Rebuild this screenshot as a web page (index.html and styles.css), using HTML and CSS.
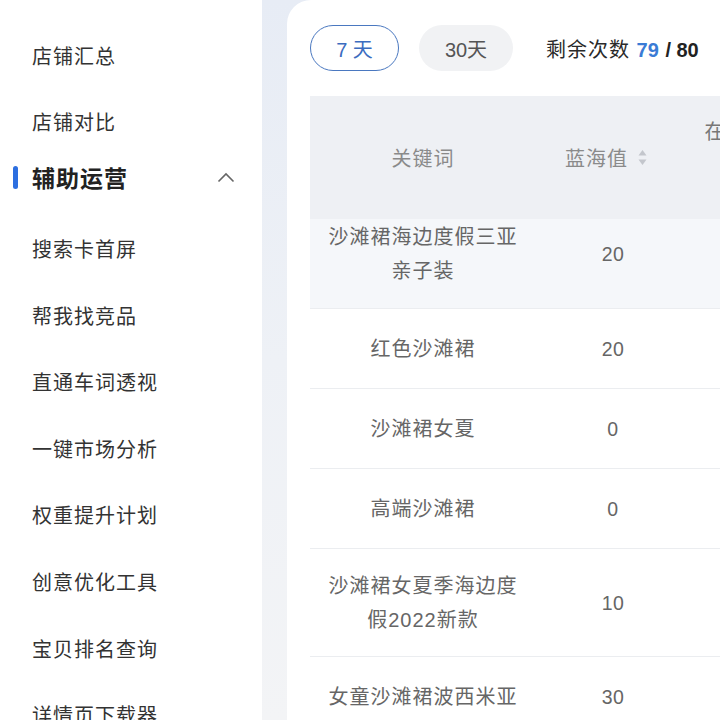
FILE: index.html
```html
<!DOCTYPE html>
<html lang="zh-CN">
<head>
    <meta charset="UTF-8">
    <meta name="viewport" content="width=device-width, initial-scale=1.0">
    <title>辅助运营</title>
    <link rel="stylesheet" href="styles.css">
</head>
<body>
    <div class="layout">
        <nav class="sidebar">
            <div class="nav-item">店铺汇总</div>
            <div class="nav-item">店铺对比</div>
            <div class="nav-group">
                <span class="group-bar"></span>
                <span class="group-title">辅助运营</span>
                <svg class="chevron" width="18" height="11" viewBox="0 0 18 11"><polyline points="1.5,9.5 9,2 16.5,9.5" fill="none" stroke="#666" stroke-width="1.6"/></svg>
            </div>
            <div class="nav-item">搜索卡首屏</div>
            <div class="nav-item">帮我找竞品</div>
            <div class="nav-item">直通车词透视</div>
            <div class="nav-item">一键市场分析</div>
            <div class="nav-item">权重提升计划</div>
            <div class="nav-item">创意优化工具</div>
            <div class="nav-item">宝贝排名查询</div>
            <div class="nav-item">详情页下载器</div>
        </nav>

        <main class="main">
            <div class="card">
                <div class="toolbar">
                    <button class="pill active">7 天</button>
                    <button class="pill">30天</button>
                    <div class="quota">剩余次数 <b class="used">79</b> <b>/ 80</b></div>
                </div>

                <div class="table">
                    <div class="thead">
                        <div class="th">关键词</div>
                        <div class="th sortable">蓝海值
                            <svg class="sorter" width="9" height="17" viewBox="0 0 9 17"><polygon points="4.5,1 8.5,6.5 0.5,6.5" fill="#c3c6cc"/><polygon points="4.5,16 8.5,10.5 0.5,10.5" fill="#c3c6cc"/></svg>
                        </div>
                        <div class="th th-multi">在线商品数<br>竞争<br>度</div>
                    </div>

                    <div class="tr cut">
                        <div class="td">沙滩裙海边度假三亚亲子装</div>
                        <div class="td">20</div>
                        <div class="td"></div>
                    </div>
                    <div class="tr">
                        <div class="td">红色沙滩裙</div>
                        <div class="td">20</div>
                        <div class="td"></div>
                    </div>
                    <div class="tr">
                        <div class="td">沙滩裙女夏</div>
                        <div class="td">0</div>
                        <div class="td"></div>
                    </div>
                    <div class="tr">
                        <div class="td">高端沙滩裙</div>
                        <div class="td">0</div>
                        <div class="td"></div>
                    </div>
                    <div class="tr tall">
                        <div class="td">沙滩裙女夏季海边度假2022新款</div>
                        <div class="td">10</div>
                        <div class="td"></div>
                    </div>
                    <div class="tr">
                        <div class="td">女童沙滩裙波西米亚</div>
                        <div class="td">30</div>
                        <div class="td"></div>
                    </div>
                </div>
            </div>
        </main>
    </div>
</body>
</html>
```

FILE: styles.css
```css
html, body { margin: 0; height: 100%; overflow: hidden; }
body { font-family: "Liberation Sans", "Noto Sans CJK SC", sans-serif; background: #fff; color: #333; }

.layout { display: flex; height: 720px; }

/* sidebar */
.sidebar { width: 262px; flex: none; background: #fff; padding-top: 22px; box-sizing: border-box; }
.nav-item { height: 66.6px; display: flex; align-items: center; padding-left: 32px; font-size: 20px; letter-spacing: 1px; color: #333; }
.nav-group { height: 60px; box-sizing: border-box; padding: 0 27px 16px 13px; display: flex; align-items: center; gap: 14px; }
.group-bar { width: 5px; height: 23px; border-radius: 3px; background: #2d6fe0; }
.group-title { flex: 1; font-size: 23px; letter-spacing: 1px; font-weight: bold; color: #222; }
.chevron { display: block; }

/* main area */
.main { flex: 1; min-width: 0; padding-left: 25px; background: linear-gradient(180deg, #e7ecf5 0%, #eef1f6 50%, #f3f4f6 100%); }
.card { background: #fff; border-top-left-radius: 24px; height: 100%; padding: 25px 0 0 23px; box-sizing: border-box; width: 560px; }

.toolbar { display: flex; align-items: center; height: 46px; }
.pill { font-family: inherit; font-size: 20px; height: 46px; border-radius: 23px; border: 1.5px solid transparent; background: #f1f2f4; color: #555; cursor: pointer; padding: 0; }
.pill.active { width: 89px; background: #fff; border-color: #4a78c0; color: #3b6cbf; margin-right: 20px; }
.pill:not(.active) { width: 94px; margin-right: 33px; }
.quota { font-size: 20px; letter-spacing: 1px; color: #2a2a2a; white-space: nowrap; }
.quota b { font-weight: bold; color: #222; letter-spacing: 0; }
.quota .used { color: #3a7bd5; }

/* table */
.table { margin-top: 25px; width: 520px; }
.thead, .tr { display: grid; grid-template-columns: 226px 154px 140px; }
.thead { height: 123px; background: #eef0f4; align-items: center; }
.th { text-align: center; font-size: 20px; letter-spacing: 1px; color: #8a8a8a; }
.th.sortable { display: flex; align-items: center; justify-content: center; gap: 10px; padding-right: 14px; }
.th-multi { line-height: 26px; color: #777; white-space: nowrap; margin-left: -6px; }

.tr { align-items: center; border-bottom: 1px solid #ebedf0; padding: 22.5px 0; }
.tr.tall { padding: 19.5px 0 19.5px; }
.tr.cut { background: #f5f7fa; padding: 1px 0 20px; }
.td { text-align: center; font-size: 20px; letter-spacing: 1px; line-height: 34px; color: #666; padding: 0 16px; }
.td:nth-child(2) { font-size: 19.5px; letter-spacing: 0.5px; }
```
